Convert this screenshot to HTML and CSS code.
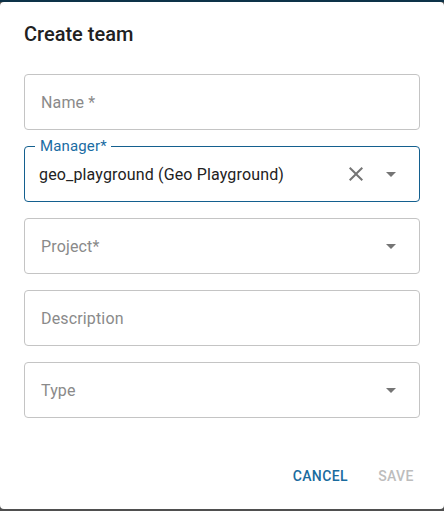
FILE: index.html
```html
<!DOCTYPE html>
<html lang="en">
<head>
<meta charset="utf-8">
<title>Create team</title>
<link rel="stylesheet" href="styles.css">
</head>
<body>
<div class="top-strip"></div>
<div class="dialog">
  <h2 class="dialog-title">Create team</h2>
  <div class="dialog-content">
    <div class="field">
      <span class="placeholder">Name *</span>
    </div>
    <div class="field focused">
      <span class="float-label">Manager*</span>
      <span class="value">geo_playground (Geo Playground)</span>
      <span class="adornments">
        <svg class="icon" viewBox="0 0 24 24" width="24" height="24"><path d="M19 6.41L17.59 5 12 10.59 6.41 5 5 6.41 10.59 12 5 17.59 6.41 19 12 13.41 17.59 19 19 17.59 13.41 12z"/></svg>
        <svg class="icon" viewBox="0 0 24 24" width="24" height="24"><path d="M7 10l5 5 5-5z"/></svg>
      </span>
    </div>
    <div class="field">
      <span class="placeholder">Project*</span>
      <span class="adornments">
        <svg class="icon" viewBox="0 0 24 24" width="24" height="24"><path d="M7 10l5 5 5-5z"/></svg>
      </span>
    </div>
    <div class="field">
      <span class="placeholder">Description</span>
    </div>
    <div class="field">
      <span class="placeholder">Type</span>
      <span class="adornments">
        <svg class="icon" viewBox="0 0 24 24" width="24" height="24"><path d="M7 10l5 5 5-5z"/></svg>
      </span>
    </div>
  </div>
  <div class="dialog-actions">
    <button class="btn btn-primary">Cancel</button>
    <button class="btn btn-disabled" disabled>Save</button>
  </div>
</div>
</body>
</html>
```

FILE: styles.css
```css
html, body {
  margin: 0;
  padding: 0;
}
body {
  width: 444px;
  height: 511px;
  background: #4f4f4f;
  font-family: Roboto, "Liberation Sans", Arial, sans-serif;
  overflow: hidden;
}
.top-strip {
  height: 2px;
  background: #0d3248;
}
.dialog {
  height: 507px;
  background: #ffffff;
  border-radius: 4px;
  display: flex;
  flex-direction: column;
  box-sizing: border-box;
}
.dialog-title {
  margin: 0;
  padding: 16px 24px;
  font-size: 20px;
  font-weight: 500;
  line-height: 32px;
  color: #212121;
}
.dialog-content {
  padding: 8px 24px 0;
  display: flex;
  flex-direction: column;
  gap: 16px;
}
.field {
  position: relative;
  height: 56px;
  box-sizing: border-box;
  border: 1px solid #c4c4c4;
  border-radius: 4px;
  display: flex;
  align-items: center;
  padding: 0 16px 0 14px;
}
.field.focused {
  border-color: #14608f;
}
.placeholder {
  flex: 1;
  padding-left: 2px;
  font-size: 16px;
  letter-spacing: 0.15px;
  color: #8a8a8a;
}
.value {
  flex: 1;
  font-size: 16px;
  letter-spacing: 0.15px;
  color: #222222;
}
.float-label {
  position: absolute;
  left: 10px;
  top: -10px;
  padding: 0 4px 0 5px;
  background: #ffffff;
  font-size: 15px;
  letter-spacing: 0.15px;
  line-height: 18px;
  color: #1a6ca3;
}
.adornments {
  display: flex;
  align-items: center;
  gap: 11px;
}
.icon {
  display: block;
  fill: #757575;
}
.dialog-actions {
  display: flex;
  justify-content: flex-end;
  gap: 8px;
  padding: 40px 16px 14px;
}
.btn {
  height: 36px;
  min-width: 64px;
  padding: 6px 8px;
  box-sizing: border-box;
  border: none;
  background: transparent;
  font-family: Roboto, "Liberation Sans", Arial, sans-serif;
  font-size: 14px;
  font-weight: 500;
  letter-spacing: 0.4px;
  text-transform: uppercase;
  border-radius: 4px;
}
.btn-primary {
  color: #1a6b9e;
}
.btn-disabled {
  color: #bdbdbd;
}
```
